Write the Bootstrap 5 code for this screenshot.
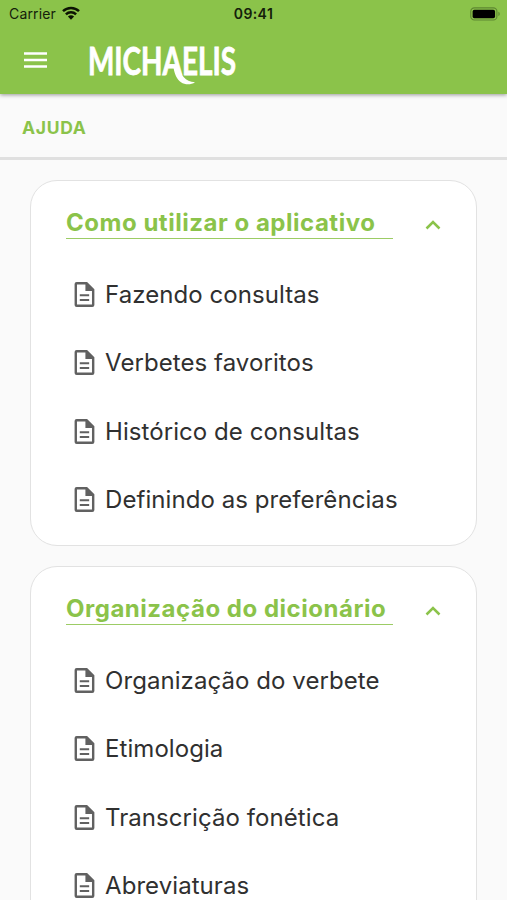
<!DOCTYPE html>
<html lang="pt-BR">
<head>
<meta charset="utf-8">
<meta name="viewport" content="width=device-width, initial-scale=1">
<title>Michaelis - Ajuda</title>
<link href="https://cdn.jsdelivr.net/npm/bootstrap@5.3.0/dist/css/bootstrap.min.css" rel="stylesheet">
<style>
  :root { --leaf: #8bc34a; }
  body { font-family: Inter, "Liberation Sans", sans-serif; background: #fafafa; height: 900px; overflow: hidden; }
  svg { display: block; flex: none; }
  .app-header { background: var(--leaf); height: 94px; box-shadow: 0 1px 4px rgba(0,0,0,.4); position: relative; }
  .status-row { height: 27px; font-size: 14px; line-height: 27px; color: #14200a; padding: 0 7px 0 9px; }
  .status-row > * { flex: 1 1 0; }
  .carrier { letter-spacing: .15px; }
  .clock { font-weight: 600; letter-spacing: .4px; padding-right: 2px; }
  .wifi { margin-left: 6px; margin-top: -2px; }
  .brand-row { height: 67px; padding-left: 24px; }
  .menu-btn { margin-top: -1px; }
  .logo { margin-left: 40px; overflow: visible; }
  .page-title { height: 66px; border-bottom: 3px solid #e0e0e0; padding: 5px 0 0 22px; font-size: 17.5px; font-weight: 700; letter-spacing: .7px; color: var(--leaf); }
  .cards { padding: 20px 30px 0; gap: 20px; }
  .help-card { height: 366px; flex: none; border: 1px solid #e2e2e2; border-radius: 27px; padding: 28px 35px 0 35px; }
  .help-title { width: 327px; height: 30px; border-bottom: 1.5px solid #9ccc65; font-size: 24px; line-height: 28px; font-weight: 700; letter-spacing: .52px; color: var(--leaf); white-space: nowrap; margin: 0; }
  .chevron { margin-top: 2px; }
  .help-items { margin-top: 21.8px; padding-left: 6px; }
  .help-items a { height: 68.4px; gap: 7px; font-size: 24px; letter-spacing: .07px; color: #303030; white-space: nowrap; }
  .help-items svg { margin-top: -1px; }
</style>
<script src="https://cdn.jsdelivr.net/npm/bootstrap@5.3.0/dist/js/bootstrap.bundle.min.js"></script>
</head>
<body>
<svg class="d-none">
  <symbol id="doc" viewBox="0 0 24 24"><path fill="#616161" fill-rule="evenodd" d="M4 0h10l7 7v15a2 2 0 0 1-2 2H4a2 2 0 0 1-2-2V2a2 2 0 0 1 2-2zM4.300 2.300v19.400h14.400V8.700h-6.300V2.300z"/><path d="M7 12.800h9M7 17.300h9" stroke="#616161" stroke-width="1.900"/></symbol>
  <symbol id="chev" viewBox="0 0 16 10"><path d="M1.500 8.500 8 2l6.500 6.500" fill="none" stroke="#8bc34a" stroke-width="2.500"/></symbol>
</svg>
<header class="app-header">
  <div class="status-row d-flex align-items-center">
    <div class="d-flex align-items-center carrier">Carrier
      <svg class="wifi" width="18" height="14" viewBox="0 0 18 14"><g fill="none" stroke="#0c1403" stroke-width="2.500"><path d="M1 5.200a11.500 11.500 0 0 1 16 0M3.900 8.300a7.300 7.300 0 0 1 10.200 0"/></g><path d="M5.900 10.600a4.500 4.500 0 0 1 6.200 0L9 13.700z" fill="#0c1403"/></svg>
    </div>
    <div class="text-center clock">09:41</div>
    <div class="d-flex justify-content-end"><svg width="30" height="14" viewBox="0 0 31 14"><rect x=".8" y=".6" width="27" height="12.600" rx="3.700" fill="none" stroke="#5f8832" stroke-width="1.200"/><rect x="2.700" y="2.500" width="23.200" height="8.800" rx="1.800" fill="#000"/><path d="M29.300 4.800c1.900.7 1.900 3.500 0 4.200z" fill="#5f8832"/></svg></div>
  </div>
  <div class="brand-row d-flex align-items-center">
    <button class="menu-btn btn p-0 border-0" aria-label="Menu"><svg width="23" height="16" viewBox="0 0 23 16"><path d="M0 1.500h23M0 8h23M0 14.500h23" stroke="#fff" stroke-width="2.600"/></svg></button>
    <svg class="logo" width="156" height="66" viewBox="87 27.500 156 66" fill="#fff" font-family="Lato, sans-serif" font-weight="700" font-size="38">
      <text x="88" y="74" textLength="148" lengthAdjust="spacingAndGlyphs" stroke="#fff" stroke-width=".8">MICHAELIS</text>
      <path d="M173.500 67l5.200-1c2 8 6.300 15.500 16.300 15.800-4 2.700-10 2.700-14 0-4.500-3.300-6.500-8.800-7.500-14.800z"/>
    </svg>
  </div>
</header>
<main>
  <div class="page-title d-flex align-items-center">AJUDA</div>
  <div class="cards d-flex flex-column">
    <section class="help-card bg-white">
      <div class="d-flex justify-content-between align-items-center"><h2 class="help-title">Como utilizar o aplicativo</h2><svg class="chevron" width="16" height="10"><use href="#chev"/></svg></div>
      <nav class="help-items d-flex flex-column">
        <a class="d-flex align-items-center text-decoration-none" href="#"><svg width="26" height="25"><use href="#doc"/></svg>Fazendo consultas</a>
        <a class="d-flex align-items-center text-decoration-none" href="#"><svg width="26" height="25"><use href="#doc"/></svg>Verbetes favoritos</a>
        <a class="d-flex align-items-center text-decoration-none" href="#"><svg width="26" height="25"><use href="#doc"/></svg>Histórico de consultas</a>
        <a class="d-flex align-items-center text-decoration-none" href="#"><svg width="26" height="25"><use href="#doc"/></svg>Definindo as preferências</a>
      </nav>
    </section>
    <section class="help-card bg-white">
      <div class="d-flex justify-content-between align-items-center"><h2 class="help-title">Organização do dicionário</h2><svg class="chevron" width="16" height="10"><use href="#chev"/></svg></div>
      <nav class="help-items d-flex flex-column">
        <a class="d-flex align-items-center text-decoration-none" href="#"><svg width="26" height="25"><use href="#doc"/></svg>Organização do verbete</a>
        <a class="d-flex align-items-center text-decoration-none" href="#"><svg width="26" height="25"><use href="#doc"/></svg>Etimologia</a>
        <a class="d-flex align-items-center text-decoration-none" href="#"><svg width="26" height="25"><use href="#doc"/></svg>Transcrição fonética</a>
        <a class="d-flex align-items-center text-decoration-none" href="#"><svg width="26" height="25"><use href="#doc"/></svg>Abreviaturas</a>
      </nav>
    </section>
  </div>
</main>
</body>
</html>
